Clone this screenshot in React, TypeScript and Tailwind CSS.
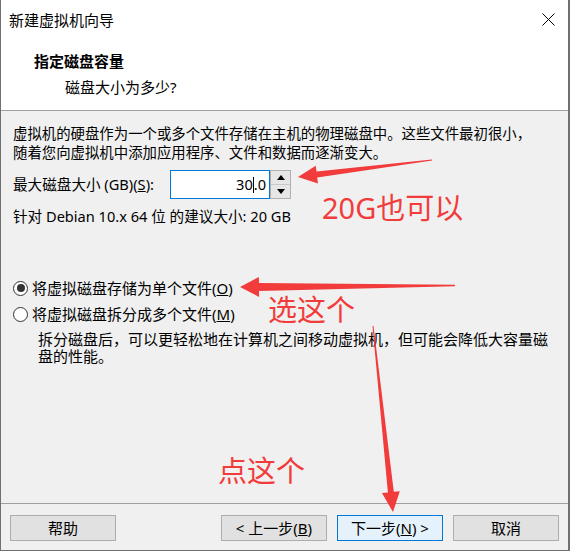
import React from "react";

type Pt = [number, number];

function arrowPoints(tail: Pt, tip: Pt, headLen: number, headHalf: number, tailHalf: number, neckHalf: number): string {
  const dx = tip[0] - tail[0];
  const dy = tip[1] - tail[1];
  const len = Math.hypot(dx, dy);
  const ux = dx / len;
  const uy = dy / len;
  const nx = -uy;
  const ny = ux;
  const bx = tip[0] - ux * headLen;
  const by = tip[1] - uy * headLen;
  const pts: Pt[] = [
    [tail[0] + nx * tailHalf, tail[1] + ny * tailHalf],
    [bx + nx * neckHalf, by + ny * neckHalf],
    [bx + nx * headHalf, by + ny * headHalf],
    tip,
    [bx - nx * headHalf, by - ny * headHalf],
    [bx - nx * neckHalf, by - ny * neckHalf],
    [tail[0] - nx * tailHalf, tail[1] - ny * tailHalf],
  ];
  return pts.map((p) => `${p[0].toFixed(1)},${p[1].toFixed(1)}`).join(" ");
}

function Radio({ checked }: { checked: boolean }) {
  return (
    <span className="flex h-[15px] w-[15px] shrink-0 items-center justify-center rounded-full border border-[#333333] bg-white">
      {checked && <span className="h-[8px] w-[8px] rounded-full bg-[#333333]" />}
    </span>
  );
}

function Btn({ children, primary }: { children: React.ReactNode; primary?: boolean }) {
  return (
    <div
      className={
        "flex h-[26px] w-[106px] items-center justify-center border text-[15px] leading-none text-black " +
        (primary ? "border-[#0078d7] bg-[#e5f1fb]" : "border-[#adadad] bg-[#e1e1e1]")
      }
    >
      {children}
    </div>
  );
}

export default function App() {
  return (
    <div className="relative h-[551px] w-[570px] overflow-hidden border-b border-l border-r-2 border-[#707070] bg-[#f0f0f0] font-['Noto_Sans','Noto_Sans_CJK_SC',sans-serif] text-black">
      <div className="flex h-[551px] flex-col">
        {/* Header */}
        <div className="h-[111px] shrink-0 border-b border-[#a0a0a0] bg-white">
          <div className="flex items-start justify-between pt-[10px] pl-[8px] pr-[13px]">
            <span className="text-[15px] leading-[20px]">新建虚拟机向导</span>
            <svg width="13" height="13" viewBox="0 0 13 13" className="mt-[3px]">
              <path d="M0.5 0.5 L12.5 12.5 M12.5 0.5 L0.5 12.5" stroke="#000" strokeWidth="1" fill="none" />
            </svg>
          </div>
          <div className="mt-[21px] pl-[33px] text-[15px] font-bold leading-[20px]">指定磁盘容量</div>
          <div className="mt-[6px] pl-[64px] text-[15px] leading-[20px]">磁盘大小为多少?</div>
        </div>

        {/* Body */}
        <div className="flex-1 px-[12px] pt-[13px] text-[14.4px]">
          <div className="leading-[19px]">
            虚拟机的硬盘作为一个或多个文件存储在主机的物理磁盘中。这些文件最初很小，
            <br />
            随着您向虚拟机中添加应用程序、文件和数据而逐渐变大。
          </div>

          <div className="mt-[8px] grid h-[29px] grid-cols-[157px_100px_21px] items-center text-[14.6px]">
            <span className="whitespace-nowrap">
              最大磁盘大小 (GB)(<span className="underline">S</span>):
            </span>
            <div className="flex h-[29px] items-center justify-end border border-[#0078d7] bg-white pr-[3px]">
              <span className="leading-none">30</span>
              <span className="h-[16px] w-[1px] bg-black" />
              <span className="leading-none">.0</span>
            </div>
            <div className="flex h-[29px] flex-col border border-[#b0b0b0] bg-[#f0f0f0]">
              <div className="flex flex-1 items-center justify-center border-b border-[#c8c8c8] bg-[#e6e6e6]">
                <svg width="8" height="5" viewBox="0 0 8 5">
                  <polygon points="0,5 8,5 4,0" fill="#000" />
                </svg>
              </div>
              <div className="flex flex-1 items-center justify-center bg-[#e6e6e6]">
                <svg width="8" height="5" viewBox="0 0 8 5">
                  <polygon points="0,0 8,0 4,5" fill="#000" />
                </svg>
              </div>
            </div>
          </div>

          <div className="mt-[8px] text-[14.6px] leading-[19px]">针对 Debian 10.x 64 位 的建议大小: 20 GB</div>

          <div className="mt-[52px] flex h-[20px] items-center gap-[4px] text-[15px]">
            <Radio checked />
            <span>
              将虚拟磁盘存储为单个文件(<span className="underline">O</span>)
            </span>
          </div>
          <div className="mt-[6px] flex h-[20px] items-center gap-[4px] text-[15px]">
            <Radio checked={false} />
            <span>
              将虚拟磁盘拆分成多个文件(<span className="underline">M</span>)
            </span>
          </div>
          <div className="mt-[7px] pl-[25px] text-[15px] leading-[17px]">
            拆分磁盘后，可以更轻松地在计算机之间移动虚拟机，但可能会降低大容量磁
            <br />
            盘的性能。
          </div>
        </div>

        {/* Footer */}
        <div className="flex h-[48px] shrink-0 justify-between border-t border-[#a0a0a0] px-[9px] pt-[11px]">
          <Btn>帮助</Btn>
          <div className="flex gap-[10px]">
            <Btn>
              &lt; 上一步(<span className="underline">B</span>)
            </Btn>
            <Btn primary>
              下一步(<span className="underline">N</span>) &gt;
            </Btn>
            <Btn>取消</Btn>
          </div>
        </div>
      </div>

      {/* Annotations */}
      <svg className="pointer-events-none absolute left-[-1px] top-0" width="570" height="551" viewBox="0 0 570 551">
        <polygon points={arrowPoints([432, 160], [298, 177], 19, 9, 0.6, 3)} fill="#f23c3c" />
        <polygon points={arrowPoints([455, 285.5], [240, 287], 19, 10, 0.8, 4)} fill="#f23c3c" />
        <polygon points={arrowPoints([373, 326], [393, 512], 20, 9, 0.5, 3)} fill="#f23c3c" />
      </svg>
      <div className="pointer-events-none absolute left-[321px] top-[190px] text-[29px] leading-[36px] text-[#f23c3c]">20G也可以</div>
      <div className="pointer-events-none absolute left-[267px] top-[292px] text-[29px] leading-[36px] text-[#f23c3c]">选这个</div>
      <div className="pointer-events-none absolute left-[217px] top-[453px] text-[29px] leading-[36px] text-[#f23c3c]">点这个</div>
    </div>
  );
}
